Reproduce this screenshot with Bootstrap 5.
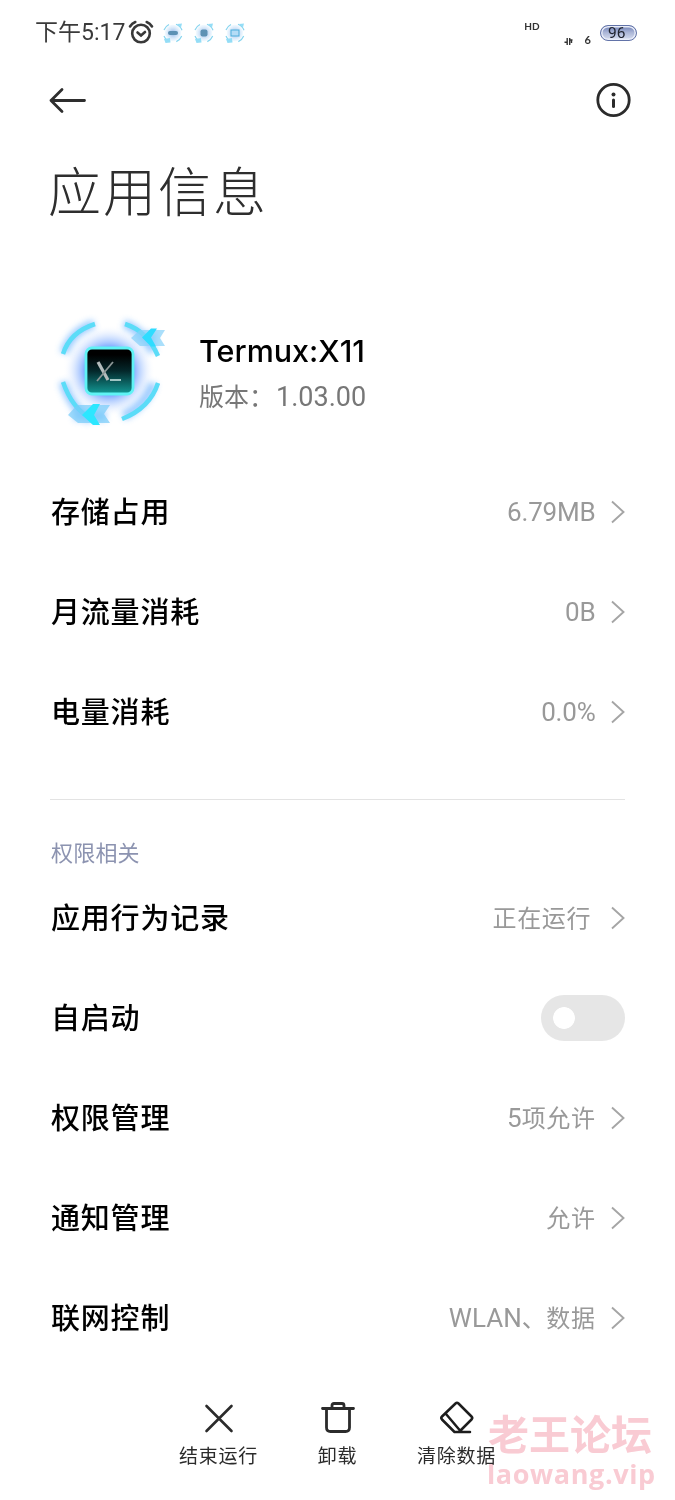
<!DOCTYPE html>
<html lang="zh-CN">
<head>
<meta charset="utf-8">
<meta name="viewport" content="width=device-width, initial-scale=1">
<title>应用信息</title>
<link href="https://cdn.jsdelivr.net/npm/bootstrap@5.3.0/dist/css/bootstrap.min.css" rel="stylesheet">
<style>
body{font-family:"Noto Sans","Noto Sans CJK SC",sans-serif;background:#fff;color:#2e2e2e;width:675px;height:1500px;overflow:hidden}
svg{display:block;flex-shrink:0;overflow:visible}
.screen{height:1500px}
.status{height:66px;padding-left:35px;padding-right:38px}
.clock{font:400 23px/30px Roboto,"Noto Sans CJK SC",sans-serif;color:#3a3a3a;width:93px;white-space:nowrap}
.status-icons{gap:11px;margin-left:9px}
.tiny{font:700 10px/12px Lato,sans-serif;color:#333}
.battery{width:37px;height:16px;border:1px solid #6273a8;border-radius:8px;background:linear-gradient(#6f80b5,#a9b4d6 45%,#d9dff0);box-shadow:inset 0 0 0 1.500px #e8ecf8;font:400 15.500px/14px Roboto,sans-serif;color:#20242f;padding-left:7px}
.topbar{height:68px;padding:0 44px 0 49px}
.headline{font:300 53px/80px "Noto Sans CJK SC",sans-serif;letter-spacing:2px;margin:15px 0 3px 48px;height:80px}
.app-head{height:116px;margin-top:86px;padding-left:52px}
.app-text{margin-left:31px;margin-top:-6px}
.app-name{font:500 30.500px/36px Inter,sans-serif;color:#000}
.app-version{font:400 25px/34px "Noto Sans CJK SC",sans-serif;color:#777;margin-top:9px}
.app-version .latin{font-size:27px;margin-left:2px}
.rows{padding-left:50px;padding-right:50px}
.rows .list-group-item{height:100px;padding:0;border:0;background:transparent}
.label{font:500 29px/44px "Noto Sans CJK SC",sans-serif;letter-spacing:.8px;color:#000;margin:-5px 0 0 1px}
.value{font:400 24px/40px "Noto Sans CJK SC",sans-serif;letter-spacing:.6px;color:#999;margin-top:-2px;margin-right:-.5px}
.latin{font-family:Roboto,sans-serif;font-size:26px;letter-spacing:0}
.value.latin{margin-top:0;font-size:26px;letter-spacing:-.2px}
.section-line{height:1px;margin:37px 50px 0;background:#e3e3e3}
.section-title{font:400 22px/32px "Noto Sans CJK SC",sans-serif;letter-spacing:.2px;color:#8c93b0;margin:35px 50px 1px 51px;height:32px}
.form-switch .form-check-input.toggle{width:84px;height:46px;margin:0;border:0;border-radius:23px;background-color:#e6e6e6;background-image:radial-gradient(circle at 23px 23px,#fff 10.5px,transparent 11.2px);background-position:0 0;background-size:100% 100%;box-shadow:none}
.actions{height:131px;padding:31px 0 0 159px}
.action{width:119px;font:400 19px/28px "Noto Sans CJK SC",sans-serif;letter-spacing:.8px;color:#2b2b2b}
.action svg{margin:0 0 4px 0}
.watermark{position:absolute;left:488px;top:1405px;color:#f9cbd3;mix-blend-mode:multiply;white-space:nowrap}
.wm-cn{font:700 41px/54px "Noto Sans CJK SC",sans-serif}
.wm-url{font:700 27px/32px "Open Sans","Noto Sans",sans-serif;letter-spacing:.6px;margin:-1px 0 0 -1px}
</style>
</head>
<body>
<svg width="0" height="0" class="position-absolute">
  <defs>
    <linearGradient id="tile" x2="0" y2="1"><stop offset=".15" stop-color="#000"/><stop offset=".5" stop-color="#04282b"/><stop offset="1" stop-color="#139a96"/></linearGradient>
    <radialGradient id="halo"><stop offset=".5" stop-color="#6a9cff" stop-opacity=".95"/><stop offset=".72" stop-color="#a9c8ff" stop-opacity=".55"/><stop offset="1" stop-color="#fff" stop-opacity="0"/></radialGradient>
    <radialGradient id="smallhalo"><stop offset=".3" stop-color="#a5c6ee"/><stop offset="1" stop-color="#e3f3ff" stop-opacity=".5"/></radialGradient>
    <filter id="soft" x="-40%" y="-40%" width="180%" height="180%"><feGaussianBlur stdDeviation="3"/></filter>
    <g id="ring" opacity=".85">
      <circle cx="10" cy="10" r="8.300" fill="url(#smallhalo)"/>
      <path d="M1 7a10 10 0 0 1 5-5.500M13 1.200a10 10 0 0 1 6 6M18.700 13a10 10 0 0 1-5.400 5.600M1 13a10 10 0 0 0 4 5" fill="none" stroke="#73cdec" stroke-width="1.200"/>
      <path d="M14 1l5-.5-1 4zM1 16l6-1 .5 4.500-5 .5z" fill="#82d8f5"/>
    </g>
    <path id="chev" d="M1 1.500 12.500 12 1 22.500" fill="none" stroke="#a5a5a5" stroke-width="1.900"/>
  </defs>
</svg>
<main class="screen position-relative d-flex flex-column">
  <header class="status d-flex align-items-center">
    <span class="clock">下午5:17</span>
    <svg width="26" height="26" viewBox="0 0 26 26" fill="none" stroke="#393939" stroke-width="2.600" stroke-linecap="round"><circle cx="13" cy="13.500" r="8.800"/><path d="M2 6.500Q4 3.200 7.300 2M24 6.500Q22 3.200 18.700 2M9.500 12.500l3.500 3 4-3.500"/></svg>
    <div class="status-icons d-flex">
      <svg width="20" height="20"><use href="#ring"/><rect x="5" y="8" width="10" height="4" rx="2" fill="#5c91b4"/></svg>
      <svg width="20" height="20"><use href="#ring"/><rect x="6.500" y="6.500" width="7" height="7" rx="2" fill="#5c91b4"/></svg>
      <svg width="20" height="20"><use href="#ring"/><rect x="6" y="7" width="8" height="6" fill="#b5dcf6" stroke="#4caddb"/></svg>
    </div>
    <span class="tiny ms-auto" style="margin-top:-14px">HD</span>
    <svg style="margin:16px 12px 0 24px" width="9" height="7" viewBox="0 0 9 7" fill="none" stroke="#333" stroke-width="1.400"><path d="M3.200 0v7M.5 4.300h2.700M5.700 7V0M5.700 2h2.800M7.500 2v3"/></svg>
    <span class="tiny" style="margin:14px 9px 0 0;font-size:11px">6</span>
    <span class="battery">96</span>
  </header>
  <nav class="topbar d-flex align-items-center justify-content-between">
    <svg width="38" height="26" viewBox="0 0 38 26" fill="none" stroke="#2e2e2e" stroke-width="2.800" stroke-linecap="round" stroke-linejoin="round"><path d="M35.500 13.500H2M13 2.500 2 13.500l11 11"/></svg>
    <svg width="35" height="35" viewBox="0 0 35 35"><circle cx="17.500" cy="17" r="15.700" fill="none" stroke="#2b2b2b" stroke-width="2.800"/><circle cx="17.500" cy="11.500" r="2" fill="#2b2b2b"/><path d="M17.500 17v6.500" stroke="#2b2b2b" stroke-width="3" stroke-linecap="round"/></svg>
  </nav>
  <h1 class="headline">应用信息</h1>
  <section class="app-head d-flex align-items-center">
    <svg width="116" height="116" viewBox="0 1 116 116">
      <circle cx="57" cy="54" r="46" fill="url(#halo)"/>
      <g fill="none" stroke="#58a7ff" stroke-width="9" opacity=".6" filter="url(#soft)"><path d="M12 36Q20 14 42 7M72 7q18 6 29 28M11 65q8 25 27 38M101 66q-7 22-30 33M22 99h32M84 20h20"/></g>
      <g fill="none" stroke="#5bdcf8" stroke-width="4.500"><path d="M11 37Q18 15 43 7M73 7q22 7 33 32M11 65q9 26 27 36M106 66q-8 25-36 36"/></g>
      <path d="M79 21l9-8h25l-5 8 5 8H88z" fill="#86d2fa" opacity=".7"/><path d="M90 20.500l9-9h6l-6 9 5 9h-5z" fill="#2edcff"/>
      <path d="M16 98l9-10h33l-6 9 6 9H26z" fill="#78ccfa" opacity=".7"/><path d="M30 98l11-11h7l-6 11 6 10h-7z" fill="#2ce7ff"/>
      <rect x="34" y="31" width="47" height="46" rx="6" fill="url(#tile)" stroke="#5ff3f5" stroke-width="2.800"/>
      <g fill="none"><path d="M46 45l10 18" stroke="#b4bcbc" stroke-width="3.200"/><path d="M61 45 45 64" stroke="#8c9696" stroke-width="1.800"/><path d="M58 63h11" stroke="#9fc4c2" stroke-width="2"/></g>
    </svg>
    <div class="app-text">
      <div class="app-name">Termux:X11</div>
      <div class="app-version">版本：<span class="latin">1.03.00</span></div>
    </div>
  </section>
  <ul class="rows list-group list-group-flush" style="margin-top:28px">
    <li class="list-group-item d-flex align-items-center"><span class="label">存储占用</span><span class="value latin ms-auto">6.79MB</span><svg class="ms-3" width="14" height="24"><use href="#chev"/></svg></li>
    <li class="list-group-item d-flex align-items-center"><span class="label">月流量消耗</span><span class="value latin ms-auto">0B</span><svg class="ms-3" width="14" height="24"><use href="#chev"/></svg></li>
    <li class="list-group-item d-flex align-items-center"><span class="label">电量消耗</span><span class="value latin ms-auto">0.0%</span><svg class="ms-3" width="14" height="24"><use href="#chev"/></svg></li>
  </ul>
  <div class="section-line"></div>
  <h2 class="section-title">权限相关</h2>
  <ul class="rows list-group list-group-flush">
    <li class="list-group-item d-flex align-items-center"><span class="label">应用行为记录</span><span class="value ms-auto me-1">正在运行</span><svg class="ms-3" width="14" height="24"><use href="#chev"/></svg></li>
    <li class="list-group-item d-flex align-items-center"><span class="label">自启动</span><div class="form-check form-switch ms-auto p-0 m-0 d-flex"><input class="form-check-input toggle" type="checkbox" role="switch" aria-label="自启动"></div></li>
    <li class="list-group-item d-flex align-items-center"><span class="label">权限管理</span><span class="value ms-auto"><span class="latin">5</span>项允许</span><svg class="ms-3" width="14" height="24"><use href="#chev"/></svg></li>
    <li class="list-group-item d-flex align-items-center"><span class="label">通知管理</span><span class="value ms-auto">允许</span><svg class="ms-3" width="14" height="24"><use href="#chev"/></svg></li>
    <li class="list-group-item d-flex align-items-center"><span class="label">联网控制</span><span class="value ms-auto"><span class="latin">WLAN</span>、数据</span><svg class="ms-3" width="14" height="24"><use href="#chev"/></svg></li>
  </ul>
  <footer class="actions d-flex">
    <div class="action d-flex flex-column align-items-center"><svg width="38" height="38" viewBox="0 0 38 38" fill="none" stroke="#2b2b2b" stroke-width="2.600" stroke-linecap="round"><path d="M6.500 7l25 25M31.500 7l-25 25"/></svg>结束运行</div>
    <div class="action d-flex flex-column align-items-center"><svg width="38" height="38" viewBox="0 0 38 38" fill="none" stroke="#2b2b2b" stroke-width="2.800" stroke-linecap="round" stroke-linejoin="round"><path d="M3.500 9.500h31M7.500 9.500V28.500q0 4 4 4h15q4 0 4-4V9.500M13 9V6.500q0-2 2-2h8q2 0 2 2V9"/></svg>卸载</div>
    <div class="action d-flex flex-column align-items-center"><svg width="38" height="38" viewBox="0 0 38 38" fill="none" stroke="#1d1d1d" stroke-width="2.500" stroke-linecap="round" stroke-linejoin="round"><path d="M20.500 4.500 33.500 17.500q1.500 1.500 0 3L21 33H16.500L4 20.500q-1.500-1.500 0-3L17.500 4.500q1.500-1.500 3 0M8 15 22 31.500M18 33h14"/></svg>清除数据</div>
  </footer>
  <div class="watermark"><div class="wm-cn">老王论坛</div><div class="wm-url">laowang.vip</div></div>
</main>
<script src="https://cdn.jsdelivr.net/npm/bootstrap@5.3.0/dist/js/bootstrap.bundle.min.js"></script>
</body>
</html>
